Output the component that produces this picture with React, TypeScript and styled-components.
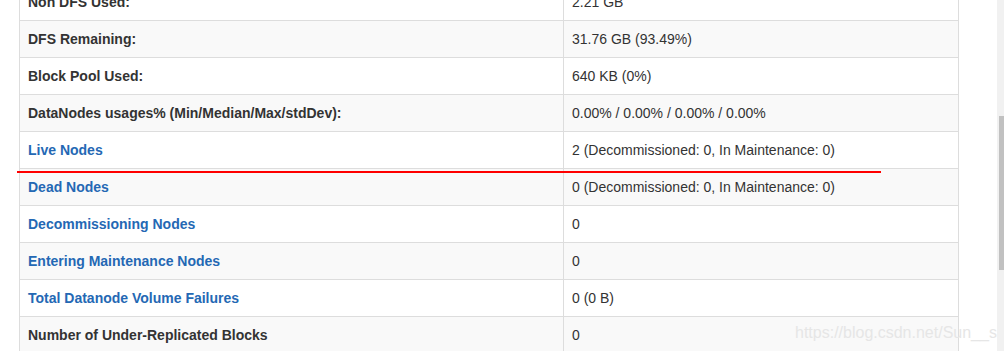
import React from "react";
import styled, { createGlobalStyle } from "styled-components";

const GlobalStyle = createGlobalStyle`
  html, body {
    margin: 0;
    padding: 0;
    background: #fff;
    overflow: hidden;
  }
  body {
    font-family: "Liberation Sans", Arial, sans-serif;
    font-size: 14px;
    line-height: 20px;
    color: #333;
  }
`;

const Page = styled.div`
  position: relative;
  display: flex;
  width: 1004px;
  height: 351px;
  overflow: hidden;
`;

const Main = styled.div`
  flex: 1;
  padding-left: 19px;
`;

const Table = styled.div`
  width: 940px;
  margin-top: -17px;
  border-left: 1px solid #ddd;
  border-right: 1px solid #ddd;
  box-sizing: border-box;
`;

const Row = styled.div<{ $striped: boolean }>`
  display: grid;
  grid-template-columns: 544px 1fr;
  border-top: 1px solid #ddd;
  background: ${(p) => (p.$striped ? "#f9f9f9" : "#fff")};
`;

const Label = styled.div`
  padding: 8px;
  border-right: 1px solid #ddd;
  font-weight: bold;
  color: #333;
  white-space: nowrap;
`;

const Value = styled.div`
  padding: 8px;
  white-space: nowrap;
`;

const Link = styled.a`
  color: #2468b4;
  text-decoration: none;
`;

const Scrollbar = styled.div`
  width: 7px;
  background: #f1f1f1;
  display: flex;
  flex-direction: column;
  align-items: flex-end;
  padding-top: 116px;
  box-sizing: border-box;
`;

const Thumb = styled.div`
  width: 5px;
  height: 154px;
  background: #c1c1c1;
`;

const RedLine = styled.div`
  position: absolute;
  left: 17px;
  top: 171px;
  width: 864px;
  height: 2px;
  background: #f00;
`;

const Watermark = styled.div`
  position: absolute;
  left: 795px;
  top: 323px;
  font-size: 16px;
  line-height: 20px;
  color: #e6e6e6;
  white-space: nowrap;
`;

const rows: { label: string; value: string; link?: boolean }[] = [
  { label: "Non DFS Used:", value: "2.21 GB" },
  { label: "DFS Remaining:", value: "31.76 GB (93.49%)" },
  { label: "Block Pool Used:", value: "640 KB (0%)" },
  {
    label: "DataNodes usages% (Min/Median/Max/stdDev):",
    value: "0.00% / 0.00% / 0.00% / 0.00%",
  },
  { label: "Live Nodes", value: "2 (Decommissioned: 0, In Maintenance: 0)", link: true },
  { label: "Dead Nodes", value: "0 (Decommissioned: 0, In Maintenance: 0)", link: true },
  { label: "Decommissioning Nodes", value: "0", link: true },
  { label: "Entering Maintenance Nodes", value: "0", link: true },
  { label: "Total Datanode Volume Failures", value: "0 (0 B)", link: true },
  { label: "Number of Under-Replicated Blocks", value: "0" },
];

export default function App() {
  return (
    <Page>
      <GlobalStyle />
      <Main>
        <Table>
          {rows.map((r, i) => (
            <Row key={i} $striped={i % 2 === 1}>
              <Label>{r.link ? <Link href="#">{r.label}</Link> : r.label}</Label>
              <Value>{r.value}</Value>
            </Row>
          ))}
        </Table>
      </Main>
      <Scrollbar>
        <Thumb />
      </Scrollbar>
      <RedLine />
      <Watermark>https://blog.csdn.net/Sun__s</Watermark>
    </Page>
  );
}
